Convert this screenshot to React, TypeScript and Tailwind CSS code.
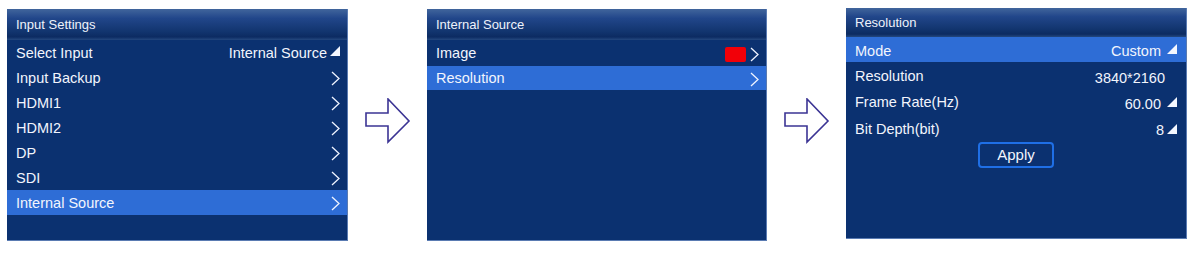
import React from "react";

const Chevron = () => (
  <svg width="9" height="15" viewBox="0 0 9 15" className="block">
    <polyline points="1,1 8,7.5 1,14" fill="none" stroke="#eef3ff" strokeWidth="1.3" />
  </svg>
);

const Tri = () => (
  <svg width="10" height="10" viewBox="0 0 10 10" className="block">
    <polygon points="10,0 10,10 0,10" fill="#f4f7ff" />
  </svg>
);

const Arrow = () => (
  <svg width="46" height="46" viewBox="0 0 46 46" className="block">
    <polygon
      points="1,15 23,15 23,1 44,23 23,44 23,28 1,28"
      fill="white"
      stroke="#3b3494"
      strokeWidth="1.6"
      strokeLinejoin="miter"
    />
  </svg>
);

const Header = ({ title, h }: { title: string; h: string }) => (
  <div
    className={`${h} flex items-center pl-[9px] text-[13px] text-[#eef2fb] bg-[linear-gradient(to_bottom,#41659c_0%,#21468a_30%,#12356f_72%,#0c2b62_90%,#24487f_100%)]`}
  >
    {title}
  </div>
);

type Row = { label: string; right?: React.ReactNode; active?: boolean };

const Panel1Rows: Row[] = [
  {
    label: "Select Input",
    right: (
      <div className="flex items-start gap-[3px]">
        <span>Internal Source</span>
        <span className="pt-[3px]"><Tri /></span>
      </div>
    ),
  },
  { label: "Input Backup", right: <Chevron /> },
  { label: "HDMI1", right: <Chevron /> },
  { label: "HDMI2", right: <Chevron /> },
  { label: "DP", right: <Chevron /> },
  { label: "SDI", right: <Chevron /> },
  { label: "Internal Source", right: <Chevron />, active: true },
];

const RowView = ({ r, h, pr }: { r: Row; h: string; pr: string }) => (
  <div
    className={`${h} flex items-center justify-between pl-[9px] ${pr} pt-[2px] ${r.active ? "bg-[#2e6dd6]" : ""}`}
  >
    <span>{r.label}</span>
    {r.right}
  </div>
);

export default function App() {
  return (
    <div
      className="w-[1196px] h-[254px] bg-white flex items-start text-[14.5px] text-[#f2f5fd]"
      style={{ fontFamily: '"Liberation Sans", Arial, sans-serif' }}
    >
      {/* Panel 1 */}
      <div className="ml-[7px] mt-[9px] w-[341px] h-[232px] bg-[#0b3170] border-b border-r border-[#5a7bb2] flex flex-col">
        <Header title="Input Settings" h="h-[31px]" />
        {Panel1Rows.map((r) => (
          <RowView key={r.label} r={r} h="h-[25px]" pr="pr-[7px]" />
        ))}
      </div>

      <div className="w-[79px] pl-[17px] pt-[98px]">
        <Arrow />
      </div>

      {/* Panel 2 */}
      <div className="mt-[9px] w-[340px] h-[232px] bg-[#0b3170] border-b border-r border-[#5a7bb2] flex flex-col">
        <Header title="Internal Source" h="h-[31px]" />
        <RowView
          r={{
            label: "Image",
            right: (
              <div className="flex items-center gap-[4px]">
                <div className="w-[21px] h-[15px] rounded-[2px] bg-[#f20008]" />
                <Chevron />
              </div>
            ),
          }}
          h="h-[26px]"
          pr="pr-[7px]"
        />
        <RowView r={{ label: "Resolution", right: <Chevron />, active: true }} h="h-[24px]" pr="pr-[7px]" />
      </div>

      <div className="w-[79px] pl-[17px] pt-[98px]">
        <Arrow />
      </div>

      {/* Panel 3 */}
      <div className="mt-[8px] w-[341px] h-[231px] bg-[#0b3170] border-b border-r border-[#5a7bb2] flex flex-col">
        <Header title="Resolution" h="h-[29px]" />
        <div className="h-[25px] flex items-center justify-between pl-[9px] pr-[9px] pt-[4px] bg-[#2e6dd6]">
          <span>Mode</span>
          <div className="flex items-center gap-[6px]">
            <span className="pt-[1px]">Custom</span>
            <span className="pb-[5px]"><Tri /></span>
          </div>
        </div>
        <div className="h-[27px] flex items-center justify-between pl-[9px] pr-[21px] pt-[3px]">
          <span>Resolution</span>
          <span className="pt-[4px]">3840*2160</span>
        </div>
        <div className="h-[26px] flex items-center justify-between pl-[9px] pr-[9px] pt-[2px]">
          <span>Frame Rate(Hz)</span>
          <div className="flex items-center gap-[6px]">
            <span className="pt-[3px]">60.00</span>
            <span className="pb-[2px]"><Tri /></span>
          </div>
        </div>
        <div className="h-[27px] flex items-center justify-between pl-[9px] pr-[9px] pt-[3px]">
          <span>Bit Depth(bit)</span>
          <div className="flex items-center gap-[3px]">
            <span className="pt-[2px]">8</span>
            <span className="pb-[3px]"><Tri /></span>
          </div>
        </div>
        <div className="flex justify-center">
          <div className="w-[76px] h-[26px] rounded-[4px] border-2 border-[#1f6fe6] flex items-center justify-center text-[15px]">
            Apply
          </div>
        </div>
      </div>
    </div>
  );
}
